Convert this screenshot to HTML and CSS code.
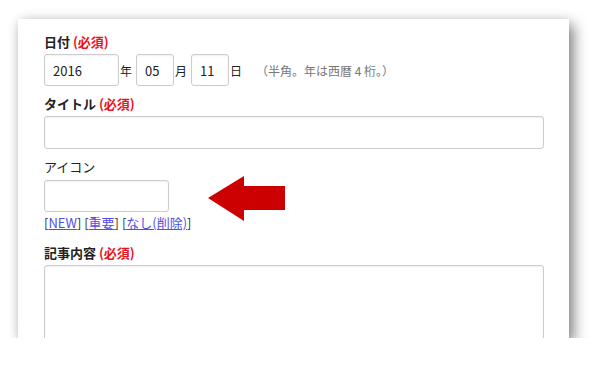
FILE: index.html
```html
<!DOCTYPE html>
<html lang="ja">
<head>
    <meta charset="UTF-8">
    <meta name="viewport" content="width=device-width, initial-scale=1.0">
    <title>記事の投稿</title>
    <link rel="stylesheet" href="styles.css">
</head>
<body>
    <div class="card">
        <form class="post-form">
            <div class="field">
                <label class="label">日付 <span class="required">(必須)</span></label>
                <div class="date-row">
                    <input type="text" class="input input-year" value="2016">
                    <span class="unit">年</span>
                    <input type="text" class="input input-short" value="05">
                    <span class="unit">月</span>
                    <input type="text" class="input input-short" value="11">
                    <span class="unit">日</span>
                    <span class="note">（半角。年は西暦 4 桁。）</span>
                </div>
            </div>
            <div class="field">
                <label class="label" for="title">タイトル <span class="required">(必須)</span></label>
                <input type="text" id="title" class="input input-wide">
            </div>
            <div class="field field-icon">
                <label class="label label-plain" for="icon">アイコン</label>
                <input type="text" id="icon" class="input input-icon">
                <div class="icon-links">[<a href="#">NEW</a>] [<a href="#">重要</a>] [<a href="#">なし(削除)</a>]</div>
                <svg class="arrow" width="77" height="45" viewBox="0 0 77 45">
                    <polygon points="0,22 36,0 36,10 77,10 77,34 36,34 36,45" fill="#cc0000"/>
                </svg>
            </div>
            <div class="field">
                <label class="label" for="body">記事内容 <span class="required">(必須)</span></label>
                <textarea id="body" class="input input-wide textarea"></textarea>
            </div>
        </form>
    </div>
</body>
</html>
```

FILE: styles.css
```css
body {
    font-family: "Noto Sans CJK JP", "Noto Sans", sans-serif;
    margin: 0;
    padding: 19px 0 0 18px;
    background-color: #ffffff;
    color: #222222;
}

.card {
    width: 551px;
    height: 319px;
    overflow: hidden;
    background-color: #ffffff;
    box-shadow: 5px 6px 13px rgba(0, 0, 0, 0.45), 0px 0px 10px rgba(0, 0, 0, 0.1);
}

.post-form {
    padding: 14px 26px 0;
}

.field {
    margin-bottom: 9px;
}

.label {
    display: block;
    font-size: 13px;
    line-height: 18px;
    font-weight: bold;
    margin-bottom: 3px;
}

.label-plain {
    font-weight: normal;
    margin-bottom: 4px;
}

.required {
    color: #e8141e;
}

.input {
    display: block;
    box-sizing: border-box;
    height: 32px;
    padding: 0 8px;
    border: 1px solid #cccccc;
    border-radius: 3px;
    box-shadow: inset 0px 1px 2px rgba(0, 0, 0, 0.06);
    font-family: inherit;
    font-size: 13px;
    color: #222222;
    background-color: #ffffff;
}

.date-row {
    display: flex;
    align-items: center;
}

.input-year {
    width: 75px;
}

.input-short {
    width: 38px;
}

.unit {
    font-size: 12px;
    margin: 0 4px 0 1px;
}

.note {
    font-size: 12px;
    color: #777777;
    margin-left: 10px;
}

.input-wide {
    width: 500px;
    height: 33px;
}

.field-icon {
    position: relative;
    margin-bottom: 13px;
}

.input-icon {
    width: 125px;
}

.icon-links {
    font-size: 13px;
    line-height: 16px;
    margin-top: 3px;
    color: #333333;
}

.icon-links a {
    color: #4f4fe8;
    text-decoration: underline;
}

.arrow {
    position: absolute;
    left: 164px;
    top: 18px;
}

.textarea {
    height: 120px;
    padding: 8px;
    resize: none;
}
```
